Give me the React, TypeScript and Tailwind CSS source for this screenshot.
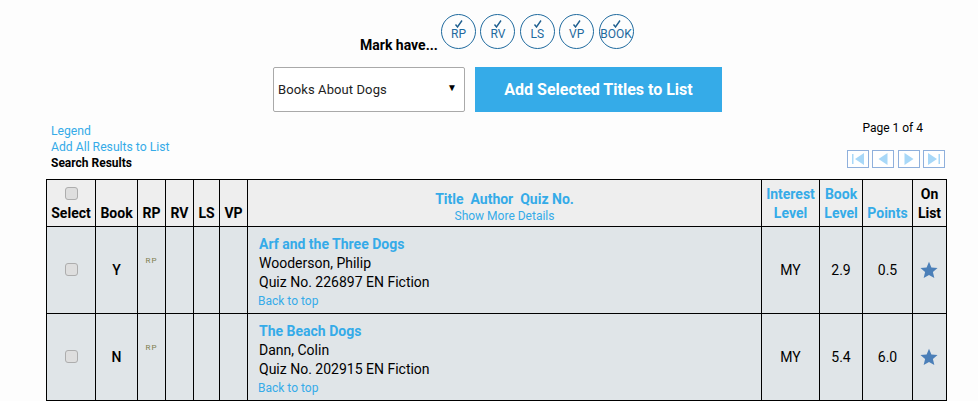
const MARKS = ['RP', 'RV', 'LS', 'VP', 'BOOK']

const BOOKS = [
  { title: 'Arf and the Three Dogs', author: 'Wooderson, Philip', quiz: 'Quiz No. 226897 EN Fiction', book: 'Y', level: '2.9', points: '0.5' },
  { title: 'The Beach Dogs', author: 'Dann, Colin', quiz: 'Quiz No. 202915 EN Fiction', book: 'N', level: '5.4', points: '6.0' },
]

const thClass = 'border border-black px-0 align-bottom text-[14px] leading-[19px] font-bold pb-[3px]'
const tdClass = 'border border-black text-center text-[14px] text-black'
const blue = 'text-[#35abe8]'
const checkClass = 'mx-auto block h-[13px] w-[13px] appearance-none rounded-[3px] border border-[#adadad] bg-[#dedede]'

function Pager({ dir }: { dir: 'first' | 'prev' | 'next' | 'last' }) {
  return (
    <button className="flex h-[18px] w-[22px] items-center justify-center border border-[#8fb0dc] bg-white">
      <svg width="16" height="12" viewBox="0 0 16 12" fill="#a8d8f8">
        {dir === 'first' && <path d="M2 1h1.5v10H2zM14 0v12L5 6z" />}
        {dir === 'prev' && <path d="M12.5 0v12L3.5 6z" />}
        {dir === 'next' && <path d="M3.5 0v12l9-6z" />}
        {dir === 'last' && <path d="M2 0v12l9-6zM12.5 1H14v10h-1.5z" />}
      </svg>
    </button>
  )
}

export default function App() {
  return (
    <div className="h-[401px] w-[978px] overflow-hidden bg-[#fdfdfd] font-['Roboto',sans-serif] text-black">
      {/* Mark have */}
      <div className="flex h-[67px] items-start pl-[360px] pt-[14px]">
        <span className="mt-[22px] w-[81px] text-[14px] leading-[19px] font-bold whitespace-nowrap">Mark have...</span>
        <div className="flex gap-[4.4px]">
          {MARKS.map((m) => (
            <div key={m} className="flex h-[35px] w-[35px] flex-col items-center rounded-full border border-[#1f6a9e] text-[#1f6a9e]">
              <svg className="mt-[5px]" width="9" height="8" viewBox="0 0 9 8" fill="none" stroke="#1f5f8f" strokeWidth="1.4">
                <path d="M1.5 4.5L3.5 7L8 .5" />
              </svg>
              <span className="text-[12px] leading-[13px]">{m}</span>
            </div>
          ))}
        </div>
      </div>

      {/* List picker */}
      <div className="flex gap-[10px] pl-[273px]">
        <div className="relative">
          <select className="h-[45px] w-[192px] appearance-none rounded-[2px] border border-[#a9a9a9] bg-white pl-[4px] text-[13px] tracking-[0.1px] text-[#222]">
            <option>Books About Dogs</option>
          </select>
          <span className="absolute top-[15px] right-[8px] text-[10px] leading-[12px] text-black">▼</span>
        </div>
        <button className="h-[45px] w-[247px] bg-[#35abe8] text-[16px] font-bold text-white">Add Selected Titles to List</button>
      </div>

      {/* Result links + pager */}
      <div className="flex h-[67px] justify-between pr-[33px] pl-[51px]">
        <div className="flex flex-col pt-[11px] text-[12.2px] leading-[16px]">
          <a className={blue}>Legend</a>
          <a className={blue}>Add All Results to List</a>
          <span className="text-[12px] font-bold">Search Results</span>
        </div>
        <div className="flex flex-col items-end">
          <span className="mt-[8px] mr-[22px] text-[12px] leading-[16px]">Page 1 of 4</span>
          <div className="mt-[14px] flex gap-[3.4px]">
            <Pager dir="first" />
            <Pager dir="prev" />
            <Pager dir="next" />
            <Pager dir="last" />
          </div>
        </div>
      </div>

      {/* Results */}
      <table className="ml-[46px] w-[900px] table-fixed border-collapse">
        <colgroup>
          <col className="w-[49px]" />
          <col className="w-[42px]" />
          <col className="w-[28px]" />
          <col className="w-[28px]" />
          <col className="w-[26px]" />
          <col className="w-[28px]" />
          <col className="w-[514px]" />
          <col className="w-[58px]" />
          <col className="w-[43px]" />
          <col className="w-[50px]" />
          <col className="w-[34px]" />
        </colgroup>
        <thead>
          <tr className="h-[47px] bg-[#eeeeee] text-center">
            <th className={thClass}>
              <input type="checkbox" className={`${checkClass} mb-[4px]`} />
              Select
            </th>
            <th className={thClass}>Book</th>
            <th className={thClass}>RP</th>
            <th className={thClass}>RV</th>
            <th className={thClass}>LS</th>
            <th className={thClass}>VP</th>
            <th className={`${thClass} ${blue}`}>
              <div className="-mt-[1px] mb-[1px] leading-[17px]">Title&nbsp; Author&nbsp; Quiz No.</div>
              <div className="text-[12px] leading-[14px] font-normal">Show More Details</div>
            </th>
            <th className={`${thClass} ${blue}`}>Interest<br />Level</th>
            <th className={`${thClass} ${blue}`}>Book<br />Level</th>
            <th className={`${thClass} ${blue}`}>Points</th>
            <th className={thClass}>On<br />List</th>
          </tr>
        </thead>
        <tbody>
          {BOOKS.map((b) => (
            <tr key={b.title} className="h-[87px] bg-[#e0e5e8]">
              <td className={`${tdClass} pb-[2px]`}>
                <input type="checkbox" className={checkClass} />
              </td>
              <td className={`${tdClass} font-medium`}>{b.book}</td>
              <td className={`${tdClass} align-top`}>
                <div className="mt-[29px] text-[8px] leading-[10px] tracking-[1px] text-[#7f7f4f]">RP</div>
              </td>
              <td className={tdClass} />
              <td className={tdClass} />
              <td className={tdClass} />
              <td className="border border-black pl-[11px] align-top">
                <div className={`mt-[8px] text-[14px] leading-[19px] font-bold ${blue}`}>{b.title}</div>
                <div className="text-[14px] leading-[19px]">{b.author}</div>
                <div className="text-[14px] leading-[19px]">{b.quiz}</div>
                <a className={`-ml-[1px] block text-[12px] leading-[19px] ${blue}`}>Back to top</a>
              </td>
              <td className={tdClass}>MY</td>
              <td className={tdClass}>{b.level}</td>
              <td className={tdClass}>{b.points}</td>
              <td className={`${tdClass} pr-[2px]`}>
                <svg className="mx-auto" width="18" height="18" viewBox="0 0 24 24" fill="#4b7fb8">
                  <path d="M12 1l3.2 7.6 8.2.7-6.2 5.4 1.9 8L12 18.5 4.9 22.7l1.9-8L.6 9.3l8.2-.7z" />
                </svg>
              </td>
            </tr>
          ))}
        </tbody>
      </table>
    </div>
  )
}
